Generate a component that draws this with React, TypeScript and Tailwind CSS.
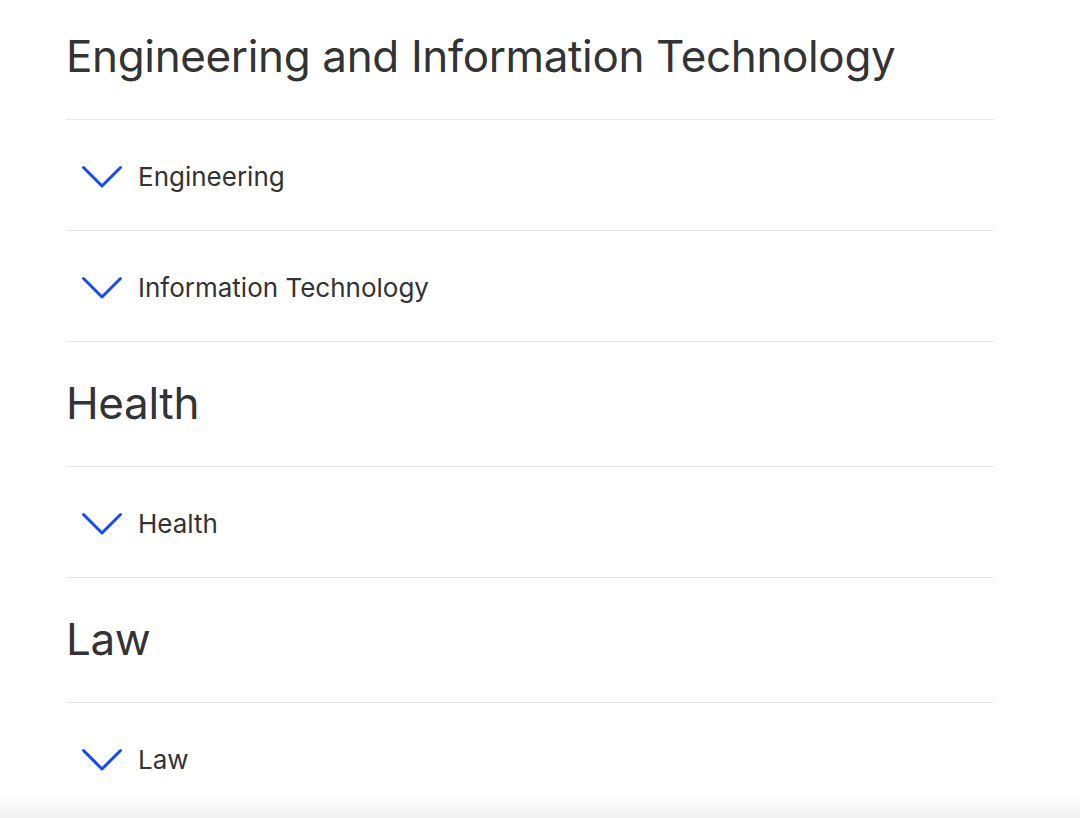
const font = { fontFamily: '"Inter", "Liberation Sans", sans-serif' };

const sections = [
  { title: "Engineering and Information Technology", items: ["Engineering", "Information Technology"] },
  { title: "Health", items: ["Health"] },
  { title: "Law", items: ["Law"] },
];

const Chevron = () => (
  <svg width="42" height="24" viewBox="0 0 42 24" fill="none" className="shrink-0">
    <path d="M2.5 2.5 L21 21 L39.5 2.5" stroke="#1549f2" strokeWidth="3" strokeLinecap="round" strokeLinejoin="round" />
  </svg>
);

const Row = ({ label }: { label: string }) => (
  <div className="flex items-center h-[111px] border-b border-[#e6e6e6] pl-[15px] pt-[3px] gap-[15px]">
    <Chevron />
    <span className="text-[26px] text-[#333333]">{label}</span>
  </div>
);

export default function App() {
  return (
    <div className="min-h-[818px] bg-white" style={font}>
      <div className="ml-[66px] w-[928px]">
        {sections.map((s, i) => (
          <div key={s.title}>
            <h2
              className={
                "text-[44px] leading-[52px] text-[#333333] tracking-[-0.36px] border-b border-[#e6e6e6] " +
                (i === 0 ? "pt-[30px] pb-[37px]" : "pt-[35px] pb-[37px]")
              }
            >
              {s.title}
            </h2>
            {s.items.map((it) => (
              <Row key={it} label={it} />
            ))}
          </div>
        ))}
      </div>
      <div className="fixed left-0 right-0 bottom-0 h-[24px] bg-gradient-to-b from-transparent to-[#f2f2f2] pointer-events-none" />
    </div>
  );
}
